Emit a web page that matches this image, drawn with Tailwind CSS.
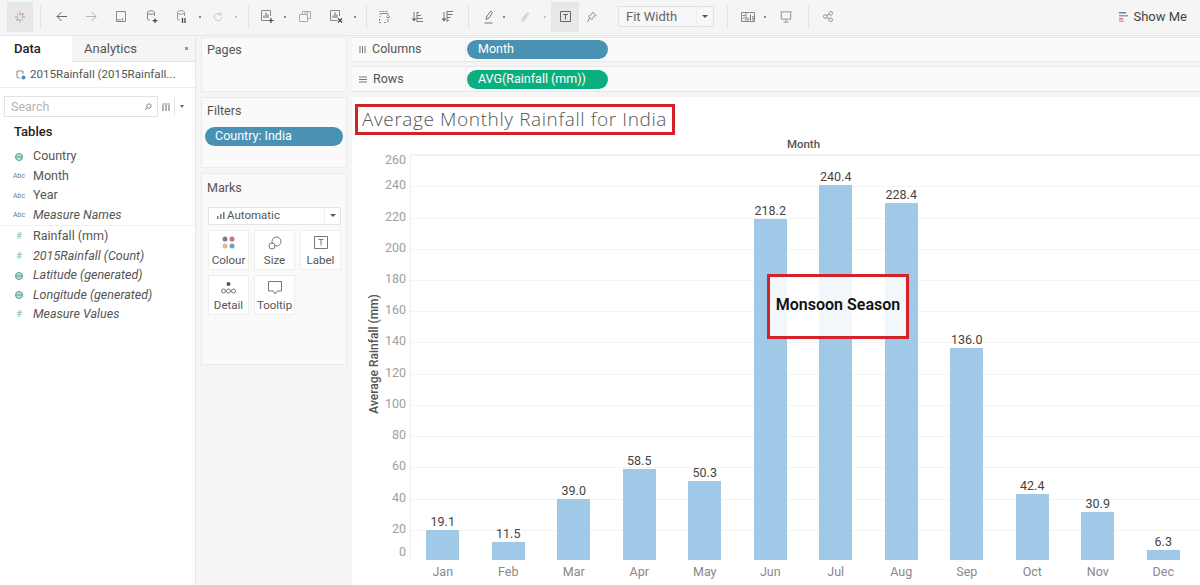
<!DOCTYPE html>
<html lang="en">
<head>
    <meta charset="UTF-8">
    <title>Average Monthly Rainfall for India</title>
    <script src="https://cdn.jsdelivr.net/npm/@tailwindcss/browser@4"></script>
</head>
<body class="bg-[#f5f5f5] overflow-hidden">
<div class="w-[1200px] h-[585px] flex flex-col overflow-hidden font-['Roboto',sans-serif] text-[12.5px] text-[#555]">

    <!-- toolbar -->
    <div class="h-[36px] pl-[7px] pr-[13px] pb-[2px] flex items-center bg-[#f5f5f5] border-b border-[#e6e6e6] shrink-0 text-[#666]">
        <div class="w-[26px] h-[30px] bg-[#e8e8e8] flex items-center justify-center">
            <svg width="12" height="12" viewBox="0 0 14 14" fill="none" stroke-width="1.500"><path d="M7 1v4M7 9v4" stroke="#dba08f"/><path d="M1 7h4M9 7h4" stroke="#a6b8cc"/><path d="M3 3l2 2M9 9l2 2" stroke="#e8c596"/><path d="M11 3L9 5M5 9l-2 2" stroke="#a888ae"/></svg>
        </div>
        <div class="w-[14px] flex justify-center"><div class="w-px h-[24px] bg-[#e2e2e2]"></div></div>
        <div class="w-[28px] flex justify-center"><svg width="11" height="11" viewBox="0 0 11 11" fill="none" stroke="#666"><path d="M11 5.500H1M5.500 1L1 5.500 5.500 10"/></svg></div>
        <div class="w-[32px] flex justify-center"><svg width="11" height="11" viewBox="0 0 11 11" fill="none" stroke="#b5b5b5"><path d="M0 5.500H10M5.500 1L10 5.500 5.500 10"/></svg></div>
        <div class="w-[28px] flex justify-center"><svg width="10" height="11" viewBox="0 0 10 11" fill="none" stroke="#888"><path d="M.5.500h9v10h-9z"/><path d="M2 9.500V8M4 9.500V8M6.500 9.500V7.500" stroke="#666"/></svg></div>
        <div class="w-[34px] flex justify-center"><svg width="11" height="13" viewBox="0 0 11 13" fill="none" stroke="#888"><path d="M.5 2.500V9c0 .800.700 1 2.500 1M7.500 2.500V6"/><ellipse cx="4" cy="2.500" rx="3.500" ry="1.800"/><path d="M8 8.500V13M5.700 10.700h4.700" stroke="#444" stroke-width="1.200"/></svg></div>
        <div class="w-[26px] flex justify-center"><svg width="10" height="13" viewBox="0 0 10 13" fill="none" stroke="#999"><path d="M.5 2.500V9c0 .800.700 1 2.500 1M7.500 2.500V6"/><ellipse cx="4" cy="2.500" rx="3.500" ry="1.800"/><path d="M5.500 8v5M8 8v5" stroke="#444" stroke-width="1.300"/></svg></div>
        <div class="w-[10px] flex justify-center"><div class="w-[2px] h-[2px] bg-[#888]"></div></div>
        <div class="w-[26px] flex justify-center"><svg width="10" height="10" viewBox="0 0 12 12" fill="none" stroke="#c5c5c5" stroke-width="1.200"><path d="M10.500 6A4.500 4.500 0 1 1 9 2.700M9.500 .5v3h-3"/></svg></div>
        <div class="w-[10px] flex justify-center"><div class="w-[2px] h-[2px] bg-[#c5c5c5]"></div></div>
        <div class="w-[14px] flex justify-center"><div class="w-px h-[24px] bg-[#e2e2e2]"></div></div>
        <div class="w-[24px] flex justify-center"><svg width="13" height="13" viewBox="0 0 13 13" fill="none" stroke="#888"><path d="M7.500 10.500h-7v-10h9v5.500"/><path d="M3 8V5.500M5 8V2.500M7 8V4.500" stroke="#666"/><path d="M10 8v5M7.500 10.500h5" stroke="#444" stroke-width="1.200"/></svg></div>
        <div class="w-[12px] flex justify-center"><div class="w-[2px] h-[2px] bg-[#888]"></div></div>
        <div class="w-[28px] flex justify-center"><svg width="12" height="11" viewBox="0 0 12 11" fill="none" stroke="#aaa"><path d="M.5 3.500h8v7h-8z"/><path d="M3.500 3V.5h8v7H9M5.500 2h4" /></svg></div>
        <div class="w-[34px] flex justify-center"><svg width="13" height="13" viewBox="0 0 13 13" fill="none" stroke="#888"><path d="M7.500 10.500h-7v-10h9v5.500"/><path d="M3 8V5.500M5 8V2.500M7 8V4.500" stroke="#666"/><path d="M8 8.500l4 4M12 8.500l-4 4" stroke="#444" stroke-width="1.200"/></svg></div>
        <div class="w-[4px] flex justify-center"><div class="w-[2px] h-[2px] bg-[#888] shrink-0"></div></div>
        <div class="w-[18px] flex justify-center"><div class="w-px h-[24px] bg-[#e2e2e2]"></div></div>
        <div class="w-[20px] flex justify-center"><svg width="12" height="12" viewBox="0 0 12 12" fill="none" stroke="#888"><path d="M.5.500h8M.5 3h3M.5 5.500h1M.5 8v3.500h2M5 11.500h3" stroke-dasharray="2 1"/><path d="M2 2.500h7V5M9 8v3.500" /><path d="M7.500 5.500l1.500 1.500 2-1.500" stroke="#666"/></svg></div>
        <div class="w-[44px] flex justify-center"><svg width="11" height="11" viewBox="0 0 11 11" fill="none" stroke="#777"><path d="M2 1v8" /><path d="M0 7.500L2 10l2-2.500" fill="#666"/><path d="M5 1.500h2M5 4.500h4M5 7.500h5.500M5 10.500h6" /><path d="M5 1v10" /></svg></div>
        <div class="w-[16px] flex justify-center"><svg width="11" height="11" viewBox="0 0 11 11" fill="none" stroke="#777"><path d="M2 1v8"/><path d="M0 7.500L2 10l2-2.500" fill="#666"/><path d="M5 .5h6M5 3.500h5.500M5 6.500h3.500M5 9.500h2"/><path d="M5 0v11"/></svg></div>
        <div class="w-[26px] flex justify-center"><div class="w-px h-[24px] bg-[#e2e2e2]"></div></div>
        <div class="w-[16px] flex justify-center"><svg width="10" height="14" viewBox="0 0 10 14" fill="none" stroke="#777"><path d="M2 9.500L3 6l4-5 1.500 1.500L5 8zM.5 13h8"/></svg></div>
        <div class="w-[14px] flex justify-center"><div class="w-[2px] h-[2px] bg-[#888]"></div></div>
        <div class="w-[28px] flex justify-center"><svg width="8" height="12" viewBox="0 0 9 14" fill="none" stroke="#c0c0c0"><path d="M2 10l5-7.500c1-1 2 0 1.200 1.200L3 11.500c-1.500 1.500-3 0-2-1.500l5-7"/></svg></div>
        <div class="w-[12px] flex justify-center"><div class="w-[2px] h-[2px] bg-[#c5c5c5]"></div></div>
        <div class="w-[28px] h-[30px] bg-[#e8e8e8] flex items-center justify-center"><svg width="11" height="11" viewBox="0 0 11 11" fill="none" stroke="#666"><path d="M.5.500h10v10H.5zM3 3.500h5M5.500 3.500v5"/></svg></div>
        <div class="w-[26px] flex justify-center"><svg width="10" height="12" viewBox="0 0 11 13" fill="none" stroke="#888"><path d="M6 1l4 4-2 .5L6 8l-.5 1.500-4-4L3 5l2.500-2zM3 7.500L.5 12"/></svg></div>
        <div class="ml-[13px] w-[96px] h-[21px] border border-[#e2e2e2] rounded-[2px] flex items-center text-[13px] bg-[#f7f7f7]">
            <span class="pl-[7px] flex-1">Fit Width</span>
            <span class="w-[17px] h-full border-l border-[#eeeeee] flex items-center justify-center"><span class="w-0 h-0 border-x-[3px] border-x-transparent border-t-[3px] border-t-[#555]"></span></span>
        </div>
        <div class="w-[26px] flex justify-center"><div class="w-px h-[24px] bg-[#e2e2e2]"></div></div>
        <div class="w-[16px] flex justify-center"><svg width="14" height="10" viewBox="0 0 14 10" fill="none" stroke="#888"><path d="M.5.500h13v9H.5zM5 .5v9M1.500 3.500h3M1.500 6h3"/><path d="M7 8.500V5.500M9.500 8.500V2.500M12 8.500V4" stroke="#666"/></svg></div>
        <div class="w-[18px] flex justify-center"><div class="w-[2px] h-[2px] bg-[#888]"></div></div>
        <div class="w-[24px] flex justify-center"><svg width="12" height="12" viewBox="0 0 14 14" fill="none" stroke="#888"><path d="M.5 1h13M1.500 1v8.500h11V1M7 9.500v3M4 13h6"/></svg></div>
        <div class="w-[20px] flex justify-center"><div class="w-px h-[24px] bg-[#e2e2e2]"></div></div>
        <div class="w-[20px] flex justify-center"><svg width="10" height="11" viewBox="0 0 11 12" fill="none" stroke="#888"><circle cx="2.500" cy="6" r="2"/><circle cx="8.500" cy="2.500" r="2"/><circle cx="8.500" cy="9.500" r="2"/><path d="M4.300 5l2.500-1.500M4.300 7l2.500 1.500"/></svg></div>
        <div class="ml-auto flex items-center gap-[5px] text-[13px] text-[#444]">
            <svg width="9" height="10" viewBox="0 0 9 10"><path d="M0 0h7v1.500H0z" fill="#6d7f9e"/><path d="M0 3h9v1.500H0z" fill="#7f9fbf"/><path d="M0 6h4v1.500H0z" fill="#d9776a"/><path d="M0 8.500h5V10H0z" fill="#e0a09a"/></svg>
            <span>Show Me</span>
        </div>
    </div>

    <div class="flex flex-1 min-h-0">
        <!-- data pane -->
        <div class="w-[196px] shrink-0 bg-white border-r border-[#e6e6e6] flex flex-col">
            <div class="h-[26px] flex text-[13px] shrink-0">
                <div class="w-[72px] flex items-center pl-[14px] font-medium text-[#222]">Data</div>
                <div class="flex-1 flex items-center pl-[12px] bg-[#f5f5f5] border-b border-[#e6e6e6] relative">Analytics
                    <span class="absolute right-[7px] top-[11px] w-[3px] h-[3px] bg-[#999]"></span>
                </div>
            </div>
            <div class="h-[26px] flex items-center gap-[4px] pl-[16px] border-b border-[#ececec] shrink-0 text-[11.6px]">
                <svg width="10" height="11" viewBox="0 0 10 11" fill="none" stroke="#888"><path d="M1 2v6c0 .800 1 1 3 1M1 2h6v3"/><circle cx="7.500" cy="8.500" r="2" fill="#4a8fb0" stroke="none"/></svg>
                <span>2015Rainfall (2015Rainfall...</span>
            </div>
            <div class="flex items-center mt-[8px] ml-[4px] h-[21px] shrink-0">
                <div class="w-[154px] h-full border border-[#e2e2e2] flex items-center justify-between pl-[6px] pr-[5px] pt-px text-[#b5b5b5]">
                    <span>Search</span>
                    <svg width="8" height="8" viewBox="0 0 9 9" fill="none" stroke="#777"><circle cx="5.500" cy="3.500" r="2.500"/><path d="M3.500 5.500L1 8"/></svg>
                </div>
                <svg class="ml-[4px]" width="8" height="8" viewBox="0 0 8 8" fill="none" stroke="#999"><path d="M0 1h8" /><path d="M1 2v6M4 2v6M7 2v6" stroke-width="1.500"/></svg>
                <div class="w-px h-[18px] bg-[#e6e6e6] ml-[4px]"></div>
                <span class="ml-[5px] w-0 h-0 border-x-[2.500px] border-x-transparent border-t-[3px] border-t-[#666]"></span>
            </div>
            <div class="mt-[7px] pl-[14px] text-[13px] font-medium text-[#222] leading-[16px]">Tables</div>
            <div id="dims" class="mt-[7px] border-b border-[#f0f0f0]"></div>
            <div id="meas" class="pt-[1px]"></div>
        </div>

        <!-- cards -->
        <div class="w-[156px] shrink-0 px-[5px] flex flex-col pt-px">
            <div class="h-[55px] bg-[#fafafa] border border-[#ebebeb] pl-[5px] pt-[3px] mb-[5px]">Pages</div>
            <div class="h-[71px] bg-[#fafafa] border border-[#ebebeb] pt-[4px] mb-[5px]">
                <div class="pl-[5px]">Filters</div>
                <div class="mx-[3px] mt-[6px] h-[19px] rounded-full bg-[#4a92b3] text-white pl-[10px] flex items-center">Country: India</div>
            </div>
            <div class="h-[192px] bg-[#fafafa] border border-[#ebebeb] pt-[5px] px-[5px]">
                <div>Marks</div>
                <div class="mt-[9px] h-[18px] ml-px bg-white border border-[#e4e4e4] flex items-center text-[11.5px]">
                    <svg class="ml-[8px] mr-[2px]" width="8" height="7" viewBox="0 0 8 7" fill="#777"><path d="M0 4h1.500v3H0zM3 2h1.500v5H3zM6 0h1.500v7H6z"/></svg>
                    <span class="flex-1">Automatic</span>
                    <span class="w-[16px] h-full border-l border-[#eeeeee] flex items-center justify-center"><span class="w-0 h-0 border-x-[3px] border-x-transparent border-t-[3px] border-t-[#555]"></span></span>
                </div>
                <div class="mt-[5px] ml-px grid grid-cols-[41px_41px_41px] gap-x-[5px] gap-y-[5px] text-[11.5px] text-[#555]">
                    <div class="h-[40px] bg-white border border-[#eee] flex flex-col items-center justify-between pt-[5px]">
                        <svg width="13" height="13" viewBox="0 0 13 13"><circle cx="3" cy="3" r="2.500" fill="#6f7f9f"/><circle cx="10" cy="3" r="2.500" fill="#d56a8a"/><circle cx="3" cy="10" r="2.500" fill="#e5b896"/><circle cx="10" cy="10" r="2.500" fill="#6fa3b8"/></svg>
                        <span>Colour</span>
                    </div>
                    <div class="h-[40px] bg-white border border-[#eee] flex flex-col items-center justify-between pt-[5px]">
                        <svg width="14" height="14" viewBox="0 0 14 14" fill="none" stroke="#777"><circle cx="8.500" cy="5.500" r="4.500"/><circle cx="4" cy="10" r="3" fill="#fff"/></svg>
                        <span>Size</span>
                    </div>
                    <div class="h-[40px] bg-white border border-[#eee] flex flex-col items-center justify-between pt-[5px]">
                        <svg width="14" height="13" viewBox="0 0 14 13" fill="none" stroke="#777"><path d="M.5.500h13v12H.5zM4.500 3.500h5M7 3.500v6"/></svg>
                        <span>Label</span>
                    </div>
                    <div class="h-[40px] bg-white border border-[#eee] flex flex-col items-center justify-between pt-[5px]">
                        <svg width="15" height="13" viewBox="0 0 15 13" fill="none" stroke="#777"><circle cx="7.500" cy="3" r="2" fill="#555" stroke="none"/><circle cx="2.500" cy="10" r="2"/><circle cx="7.500" cy="10" r="2"/><circle cx="12.500" cy="10" r="2"/></svg>
                        <span>Detail</span>
                    </div>
                    <div class="h-[40px] bg-white border border-[#eee] flex flex-col items-center justify-between pt-[5px]">
                        <svg width="14" height="14" viewBox="0 0 14 14" fill="none" stroke="#777"><path d="M.5.500h13v9.500H9.500L7 13l-1.500-3H.5z"/></svg>
                        <span>Tooltip</span>
                    </div>
                </div>
            </div>
        </div>

        <!-- shelves + view -->
        <div class="flex-1 min-w-0 flex flex-col pt-px">
            <div class="h-[25px] bg-[#fafafa] border-y border-[#e8e8e8] flex items-center mb-[4px] shrink-0">
                <div class="w-[114px] h-full flex items-center gap-[6px] pl-[7px] border-r border-[#eee]">
                    <svg width="7" height="7" viewBox="0 0 7 7" fill="none" stroke="#777"><path d="M1 0v7M3.500 0v7M6 0v7"/></svg>
                    <span>Columns</span>
                </div>
                <div class="ml-[1px] w-[141px] h-[19px] rounded-full bg-[#4a92b3] text-white pl-[11px] flex items-center">Month</div>
            </div>
            <div class="h-[26px] bg-[#fafafa] border-y border-[#e8e8e8] flex items-center mb-[5px] shrink-0">
                <div class="w-[114px] h-full flex items-center gap-[6px] pl-[7px] border-r border-[#eee]">
                    <svg width="8" height="7" viewBox="0 0 8 7" fill="none" stroke="#777"><path d="M0 1h8M0 3.500h8M0 6h8"/></svg>
                    <span>Rows</span>
                </div>
                <div class="ml-[1px] w-[141px] h-[19px] rounded-full bg-[#0bae7d] text-white pl-[11px] flex items-center">AVG(Rainfall (mm))</div>
            </div>

            <div class="flex-1 min-h-0 bg-white relative flex flex-col">
                <div class="mt-[7px] ml-[3px] w-[320px] h-[31px] border-[3px] border-[#d2232a] flex items-center pl-[4px] font-['Open_Sans',sans-serif] text-[19px] font-light tracking-[0.6px] text-[#555] shrink-0 whitespace-nowrap">Average Monthly Rainfall for India</div>
                <div class="h-[19px] ml-[59px] pr-[4px] flex items-center justify-center text-[11.5px] font-medium text-[#555] shrink-0">Month</div>
                <div class="h-[406px] flex shrink-0">
                    <div id="axis" class="w-[59px] relative border-r border-[#f0f0f0]">
                        <div class="absolute left-[22px] top-[200px] -translate-x-1/2 -translate-y-1/2 -rotate-90 whitespace-nowrap text-[12px] font-medium text-[#555]">Average Rainfall (mm)</div>
                    </div>
                    <div class="flex-1 relative border-t border-[#f0f0f0]">
                        <div id="grid"></div>
                        <div id="bars" class="absolute inset-y-0 left-[-1px] right-[4px] grid grid-cols-12"></div>
                    </div>
                </div>
                <div id="months" class="ml-[58px] mr-[4px] h-[25px] grid grid-cols-12 text-[12.5px] text-[#888] text-center items-center"></div>

                <!-- annotation -->
                <div class="absolute left-[415px] top-[177px] w-[142px] h-[65px] border-[3px] border-[#d2232a] bg-white/85 flex items-center justify-center pb-[4px] text-[16px] font-semibold text-[#111]">Monsoon Season</div>
            </div>
        </div>
    </div>
</div>

<script>
    const dims = [['globe', 'Country', false], ['abc', 'Month', false], ['abc', 'Year', false], ['abc', 'Measure Names', true]];
    const meas = [['num', 'Rainfall (mm)', false], ['num', '2015Rainfall (Count)', true], ['globe', 'Latitude (generated)', true], ['globe', 'Longitude (generated)', true], ['num', 'Measure Values', true]];

    function fieldRow([type, name, italic]) {
        let icon = '';
        if (type === 'abc') icon = '<span class="text-[7px] text-[#5b7f95]">Abc</span>';
        if (type === 'num') icon = '<span class="text-[9px] leading-none text-[#7fbfa8]">#</span>';
        if (type === 'globe') icon = '<svg width="8" height="8" viewBox="0 0 8 8" fill="#bfe0d8" stroke="#4f9d96"><circle cx="4" cy="4" r="3.500"/><path d="M.5 4h7" /></svg>';
        return `<div class="h-[19.5px] flex items-center">
            <div class="w-[33px] pl-[10px] shrink-0"><span class="w-[20px] flex justify-center -ml-[1px]">${icon}</span></div>
            <span class="${italic ? 'italic' : ''}">${name}</span>
        </div>`;
    }
    document.getElementById('dims').innerHTML = dims.map(fieldRow).join('');
    document.getElementById('meas').innerHTML = meas.map(fieldRow).join('');

    const data = [['Jan', 19.1], ['Feb', 11.5], ['Mar', 39.0], ['Apr', 58.5], ['May', 50.3], ['Jun', 218.2], ['Jul', 240.4], ['Aug', 228.4], ['Sep', 136.0], ['Oct', 42.4], ['Nov', 30.9], ['Dec', 6.3]];
    const pxPerUnit = 1.561;

    document.getElementById('bars').innerHTML = data.map(([m, v]) => `
        <div class="flex flex-col items-center justify-end">
            <span class="text-[12.5px] leading-[17px] text-[#444]">${v.toFixed(1)}</span>
            <div class="w-[33px] bg-[#9fc9e7]" style="height:${v * pxPerUnit}px"></div>
        </div>`).join('');
    document.getElementById('months').innerHTML = data.map(([m]) => `<div>${m}</div>`).join('');

    // ticks, top and bottom labels get pushed inside the pane like in Tableau
    let axis = '', grid = '';
    for (let t = 0; t <= 260; t += 20) {
        const y = 406 - t * pxPerUnit;
        const labelY = t === 260 ? y + 6 : t === 0 ? y - 8 : y;
        axis += `<span class="absolute right-[4px] -translate-y-1/2 text-[12.5px] text-[#a0a0a0]" style="top:${labelY}px">${t}</span>`;
        if (t > 0) grid += `<div class="absolute left-0 right-0 h-px bg-[#f4f4f4]" style="top:${y}px"></div>`;
    }
    document.getElementById('axis').insertAdjacentHTML('beforeend', axis);
    document.getElementById('grid').innerHTML = grid;
</script>
</body>
</html>
